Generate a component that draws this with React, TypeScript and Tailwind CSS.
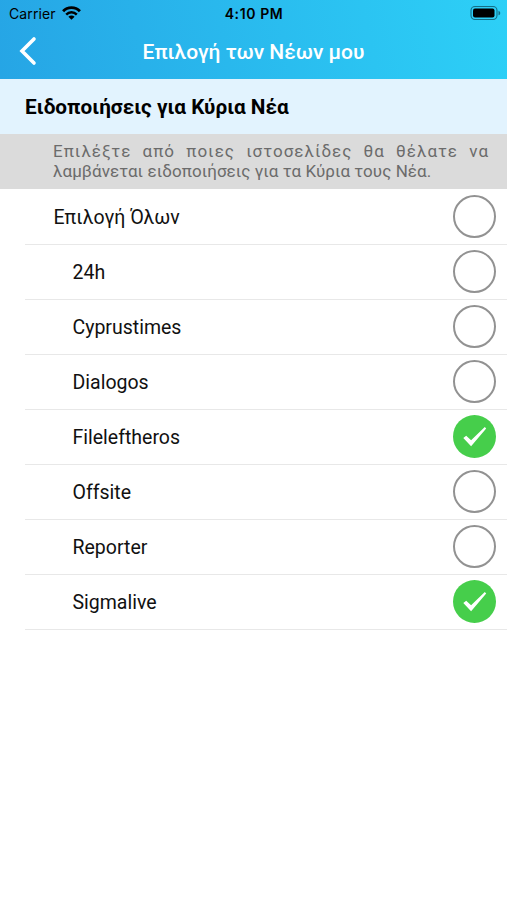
import { useState } from "react";

interface Source {
    id: string;
    label: string;
}

const sources: Source[] = [
    { id: "24h", label: "24h" },
    { id: "cyprustimes", label: "Cyprustimes" },
    { id: "dialogos", label: "Dialogos" },
    { id: "fileleftheros", label: "Fileleftheros" },
    { id: "offsite", label: "Offsite" },
    { id: "reporter", label: "Reporter" },
    { id: "sigmalive", label: "Sigmalive" },
];

function StatusBar() {
    return (
        <div className="grid h-7 grid-cols-3 items-center pl-[9px] pr-[6px] font-['Inter',sans-serif] text-black">
            <div className="flex items-center gap-[6px]">
                <span className="text-[14px] leading-7 tracking-[0.1px]">Carrier</span>
                <svg className="-mt-[2px]" width="19" height="14" viewBox="0 0 19 14" fill="none">
                    <path d="M1.1 5.3C5.6.4 13.4.4 17.9 5.3" stroke="currentColor" strokeWidth="2.8" />
                    <path d="M4.2 8.6C7.2 5.6 11.8 5.6 14.8 8.6" stroke="currentColor" strokeWidth="2.5" />
                    <path d="M6.4 10.8C8.2 9.1 10.8 9.1 12.6 10.8L9.5 13.8Z" fill="currentColor" />
                </svg>
            </div>
            <span className="-ml-[2px] text-center text-[14px] font-semibold leading-7 tracking-[0.6px]">
                4:10 PM
            </span>
            <svg className="-mt-[2px] justify-self-end" width="31" height="16" viewBox="0 0 31 16" fill="none">
                <rect x="1" y="1.5" width="26" height="13" rx="4" stroke="#146f86" strokeWidth="1.1" />
                <rect x="3" y="3.5" width="21.5" height="9" rx="2" fill="currentColor" />
                <path d="M28.5 5.7C30.8 6.5 30.8 9.5 28.5 10.3Z" fill="#146f86" />
            </svg>
        </div>
    );
}

function CheckCircle({ checked }: { checked: boolean }) {
    return (
        <svg className="mb-px" width="43" height="43" viewBox="0 0 43 43" fill="none">
            {checked ? (
                <>
                    <circle cx="21.5" cy="21.5" r="21.5" fill="#46ce4b" />
                    <path d="M10.3 23L13.2 20.7L18.1 25.2L31.8 12L33.2 13.4L18.1 31.3Z" fill="white" />
                </>
            ) : (
                <circle cx="21.5" cy="21.5" r="20.5" stroke="#929292" strokeWidth="2" />
            )}
        </svg>
    );
}

interface OptionRowProps {
    label: string;
    checked: boolean;
    nested?: boolean;
    onToggle: () => void;
}

function OptionRow({ label, checked, nested = false, onToggle }: OptionRowProps) {
    return (
        <button
            type="button"
            role="checkbox"
            aria-checked={checked}
            onClick={onToggle}
            className={`flex h-[55px] w-full items-center justify-between border-b border-[#e8e8e8] pr-[11.5px] text-left text-[19.5px] text-[#111111] ${
                nested ? "pl-[47.5px]" : "pl-[28.5px]"
            }`}
        >
            <span className="pt-[2px]">{label}</span>
            <CheckCircle checked={checked} />
        </button>
    );
}

export default function App() {
    const [selected, setSelected] = useState<string[]>(["fileleftheros", "sigmalive"]);

    const allSelected = selected.length === sources.length;

    const toggle = (id: string) => {
        setSelected((prev) => (prev.includes(id) ? prev.filter((item) => item !== id) : [...prev, id]));
    };

    const toggleAll = () => {
        setSelected(allSelected ? [] : sources.map((source) => source.id));
    };

    return (
        <div className="min-h-screen bg-white font-['Roboto',sans-serif]">
            <header className="h-[79px] bg-linear-[78deg,#26a5e5,#2dd0f7]">
                <StatusBar />
                <div className="grid h-[49px] grid-cols-[60px_1fr_60px] items-center text-white">
                    <button type="button" aria-label="Πίσω" className="-mt-[3px] pl-[18px]">
                        <svg width="19" height="30" viewBox="0 0 19 30" fill="none">
                            <path
                                d="M16 3L4 15L16 27"
                                stroke="currentColor"
                                strokeWidth="3.6"
                                strokeLinecap="round"
                                strokeLinejoin="miter"
                            />
                        </svg>
                    </button>
                    <h1 className="pt-px text-center text-[21px] font-medium">Επιλογή των Νέων μου</h1>
                </div>
            </header>

            <h2 className="flex h-[55px] items-center bg-[#e2f3fe] pl-[25px] pt-[2px] text-[20.75px] font-bold text-black">
                Ειδοποιήσεις για Κύρια Νέα
            </h2>

            <p className="h-[55px] bg-[#dbdbdb] pl-[53px] pr-[18px] pt-[7px] text-[17px] leading-5 text-[#6b6b6b]">
                <span className="block whitespace-nowrap tracking-[1px] [text-align-last:justify]">
                    Επιλέξτε από ποιες ιστοσελίδες θα θέλατε να
                </span>
                <span className="block whitespace-nowrap tracking-[0.06px]">
                    λαμβάνεται ειδοποιήσεις για τα Κύρια τους Νέα.
                </span>
            </p>

            <main className="pl-[25px]">
                <div className="border-t border-transparent">
                    <OptionRow label="Επιλογή Όλων" checked={allSelected} onToggle={toggleAll} />
                    {sources.map((source) => (
                        <OptionRow
                            key={source.id}
                            label={source.label}
                            checked={selected.includes(source.id)}
                            nested
                            onToggle={() => toggle(source.id)}
                        />
                    ))}
                </div>
            </main>
        </div>
    );
}
